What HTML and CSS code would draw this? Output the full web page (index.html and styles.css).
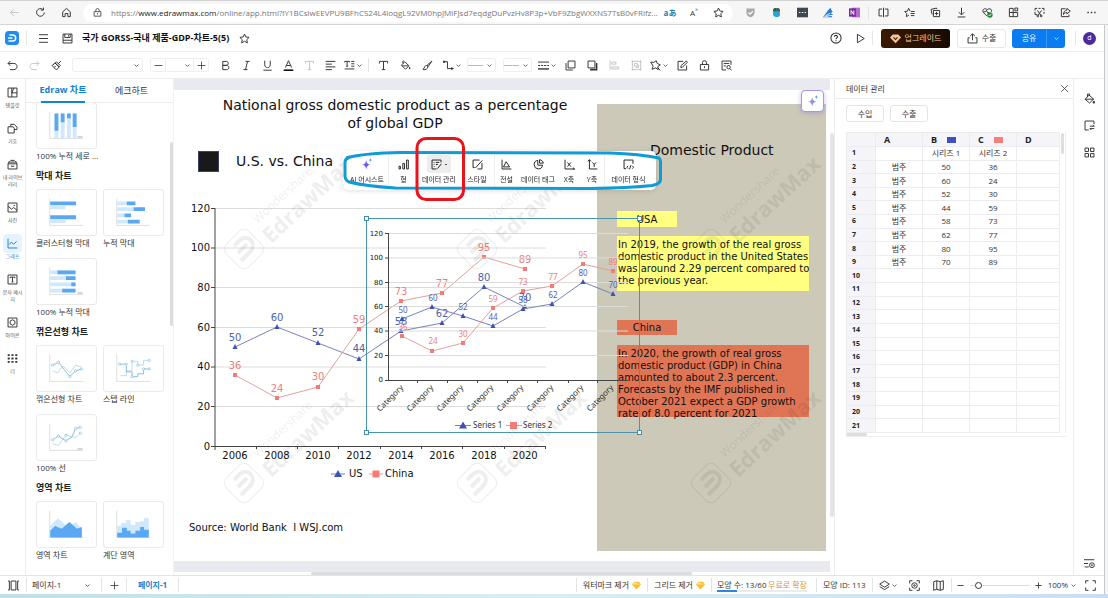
FILE: index.html
```html
<!DOCTYPE html>
<html lang="ko">
<head>
<meta charset="utf-8">
<meta name="viewport" content="width=device-width, initial-scale=1">
<title>EdrawMax</title>
<link rel="stylesheet" href="styles.css">
</head>
<body>
<svg class="defs" aria-hidden="true">
  <symbol id="i-chev" viewBox="0 0 16 16"><path d="M2 5l6 6 6-6"/></symbol>
  <symbol id="i-back" viewBox="0 0 16 16"><path d="M14 8H2M7 3L2 8l5 5"/></symbol>
  <symbol id="i-reload" viewBox="0 0 16 16"><path d="M13.500 8A5.600 5.600 0 1 1 11.500 3.600M8.500 4.500h3.800V.8"/></symbol>
  <symbol id="i-home" viewBox="0 0 16 16"><path d="M2.500 7L8 2l5.500 5v7H10V9.500H6V14H2.500z"/></symbol>
  <symbol id="i-lock" viewBox="0 0 16 16"><path d="M2 6.500h12v8H2zM5 6.500V4a3 3 0 0 1 6 0v2.500M8 9v2.500"/></symbol>
  <symbol id="i-star" viewBox="0 0 16 16"><path d="M8 1.500l2 4.300 4.700.6-3.400 3.300.8 4.700L8 12.100l-4.100 2.300.8-4.700L1.300 6.400 6 5.800z"/></symbol>
  <symbol id="i-shield" viewBox="0 0 16 16"><path d="M2 2h12v6c0 4-3 6-6 7-3-1-6-3-6-7z" fill="#a9a9a9" stroke="none"/><path d="M5 8l2.500 2.500L11.500 6" stroke="#fff" stroke-width="1.600"/></symbol>
  <symbol id="i-mouse" viewBox="0 0 16 16"><path d="M3 4c1-3 9-3 10 0v7c0 5-9 5-10 0z" fill="#2aa3d8" stroke="none"/><path d="M3 4c1-3 4-3 5-2v4H3z" fill="#1b6a3c" stroke="none"/><path d="M8 2c2-1 4 0 5 2v2H8z" fill="#555" stroke="none"/></symbol>
  <symbol id="i-dots-sq" viewBox="0 0 16 16"><path d="M0 1h16v14H0z" fill="#3d4852" stroke="none"/><path d="M3 8h2M7 8h2M11 8h2" stroke="#fff" stroke-width="1.800"/></symbol>
  <symbol id="i-wing" viewBox="0 0 16 16"><path d="M0 15l5-7 2-3 4-4 1 3 2 3-3 2 4 2-4 1 3 3z" fill="#2d7bd0" stroke="none"/><path d="M2 14l8-5M4 14l8-2" stroke="#f6f6f6"/></symbol>
  <symbol id="i-onenote" viewBox="0 0 16 16"><path d="M4 1h12v14H4z" fill="#b36ad0" stroke="none"/><path d="M0 2h10v12H0z" fill="#7a2a9c" stroke="none"/><path d="M3 11V5l4 6V5" stroke="#fff"/></symbol>
  <symbol id="i-split" viewBox="0 0 16 16"><path d="M6 3H1.500v10H6M10 3h4.500v10H10M8 1v14"/></symbol>
  <symbol id="i-fav" viewBox="0 0 16 16"><path d="M9 6L6.800 2 5 6l-4 .5 3 3L3.400 14 7 12M10 6.500h5.500M9.500 9.500h6M10 12.500h5"/></symbol>
  <symbol id="i-collect" viewBox="0 0 16 16"><path d="M5 5h9v9H5zM3 11L1.500 3.500l8-2L10 3M9.500 7v5M7 9.500h5"/></symbol>
  <symbol id="i-down" viewBox="0 0 16 16"><path d="M8 1v10M4 7.500l4 4 4-4M2.500 14.500h11"/></symbol>
  <symbol id="i-heart" viewBox="0 0 16 16"><path d="M7 13L2 8C-.5 4 4 .5 7.500 4 11 .5 15.500 4 13.500 7M2 7h3l1.500-2L8 8h2"/><circle cx="11.500" cy="11.500" r="4" fill="#1d8a34" stroke="none"/><path d="M9.500 11.500l1.500 1.500 2.500-3" stroke="#fff"/></symbol>
  <symbol id="i-ext" viewBox="0 0 16 16"><path d="M2 2h5.500v12H2zM2 8h12v6H7.500M10 1.500h4v4h-4z"/></symbol>
  <symbol id="i-snip" viewBox="0 0 16 16"><path d="M1.500 5V2h3M6.500 2h3M11.500 2h3v3M14.500 7v3M1.500 7v4h3M6 12l5-7M10 12L5 5"/><circle cx="5.500" cy="13" r="1.300"/><circle cx="10.500" cy="13" r="1.300"/></symbol>
  <symbol id="i-share" viewBox="0 0 16 16"><path d="M8 2.500H2V14h11v-3M10 2l5 4-5 4V8c-3 0-4 1-5 3 0-4 2-6 5-6.500z"/></symbol>
  <symbol id="i-more" viewBox="0 0 16 16"><path d="M2 8h2M7 8h2M12 8h2" stroke-width="2"/></symbol>
  <symbol id="i-menu" viewBox="0 0 16 16"><path d="M1.500 2.500h13M1.500 8h13M1.500 13.500h13"/></symbol>
  <symbol id="i-save" viewBox="0 0 16 16"><path d="M1.500 1.500h13v13h-13zM4 1.500v5h8v-5M9.500 3v2M1.500 10.500h13"/></symbol>
  <symbol id="i-help" viewBox="0 0 16 16"><circle cx="8" cy="8" r="6.800"/><path d="M5.800 6.300C6 3.700 10.300 4 10 6.500 9.800 7.800 8 8 8 9.500M8 11v1.200"/></symbol>
  <symbol id="i-play" viewBox="0 0 16 16"><path d="M3.500 1.800L13.500 8l-10 6.200z"/></symbol>
  <symbol id="i-gem" viewBox="0 0 16 16"><path d="M4 2h8l4 4.500L8 15 0 6.500z" stroke="none" fill="currentColor"/><path d="M5.200 6.500L8 9.500l2.800-3" stroke="#3a1a00" stroke-width="1.600"/></symbol>
  <symbol id="i-gold" viewBox="0 0 16 16"><path d="M3.500 1.500h9L16 6l-8 9L0 6z" fill="#f7bd34" stroke="none"/><path d="M3.500 1.500L0 6h16L10 4z" fill="#ffdf7a" stroke="none"/></symbol>
  <symbol id="i-export" viewBox="0 0 16 16"><path d="M8 10.500V1.500M4.500 4.500L8 1.200l3.500 3.300M4 7H1.500v7.500h13V7H12"/></symbol>
  <symbol id="i-undo" viewBox="0 0 16 16"><path d="M5 1.500L1.500 5 5 8.500M1.500 5H10c6 0 6 9 0 9H4.500"/></symbol>
  <symbol id="i-redo" viewBox="0 0 16 16"><path d="M11 1.500L14.500 5 11 8.500M14.500 5H6c-6 0-6 9 0 9h5.500"/></symbol>
  <symbol id="i-brush" viewBox="0 0 16 16"><path d="M14.500 1.500L10.500 5.500M6 4l6 6M8 2.500l5.500 5.500-2 2L6 4.500zM6 4.500L1.500 8 8 14.500 12 10M4.500 11L7 8.500"/></symbol>
  <symbol id="i-bold" viewBox="0 0 16 16"><path d="M4 2h5c4 0 4 5.800 0 5.800H4zM4 7.800h5.500c4.500 0 4.500 6.200 0 6.200H4z"/></symbol>
  <symbol id="i-ital" viewBox="0 0 16 16"><path d="M6.500 2h6M3.500 14h6M9.500 2l-3 12"/></symbol>
  <symbol id="i-under" viewBox="0 0 16 16"><path d="M4 1v6c0 5.500 8 5.500 8 0V1M2 14.800h12"/></symbol>
  <symbol id="i-color" viewBox="0 0 16 16"><path d="M3.500 11L8 1l4.500 10M5 8h6"/><path d="M1 14.800h14" stroke="#000" stroke-width="2.200"/></symbol>
  <symbol id="i-text" viewBox="0 0 16 16"><path d="M2 5V2h12v3M8 2v12M5.500 14h5"/></symbol>
  <symbol id="i-align" viewBox="0 0 16 16"><path d="M1 2h14M1 6h9M1 10h14M1 14h9"/></symbol>
  <symbol id="i-tline" viewBox="0 0 16 16"><path d="M1 3.500V2h7v1.500M4.500 2v7M3 9h3M10.500 2H15M10.500 5.500H15M10.500 9H15M1 13h14"/></symbol>
  <symbol id="i-fill" viewBox="0 0 16 16"><path d="M7 2.500l6 6-5 5-6-6zM3 8.500h9M5 5L3.500 2.500 6 1"/><path d="M14 10.500c2 3-2 3 0 0z" fill="currentColor"/></symbol>
  <symbol id="i-pen" viewBox="0 0 16 16"><path d="M14.500 1.500L7.500 7.500l1.500 2 5.500-8zM7 8c-3-.5-3 3-5.500 6C5 14.500 9 13 8.500 9.500z"/></symbol>
  <symbol id="i-conn" viewBox="0 0 16 16"><path d="M1 2.500h5.500v10H13"/><path d="M0 1h3v3H0zM12 10l4 2.500-4 2.500z" fill="currentColor" stroke="none"/></symbol>
  <symbol id="i-lines" viewBox="0 0 16 16"><path d="M0 3h16"/><path d="M0 8h16" stroke-dasharray="3 1.500"/><path d="M0 13h16" stroke-width="2"/></symbol>
  <symbol id="i-front" viewBox="0 0 16 16"><path d="M4.500 1.500h10v10h-10zM1.500 4.500v10h10"/></symbol>
  <symbol id="i-backw" viewBox="0 0 16 16"><path d="M1.500 1.500h10v10h-10z"/><path d="M14 4.500V14H4.500" stroke-width="2.200"/></symbol>
  <symbol id="i-alignl" viewBox="0 0 16 16"><path d="M1.500 1v14M4 3h6v3H4zM4 10h10v3H4z"/></symbol>
  <symbol id="i-group" viewBox="0 0 16 16"><path d="M2 2h12v12H2zM5 5h4v4H5zM7.500 9.500V11H11V7H9.500"/><path d="M1 2h2M13 2h2M1 14h2M13 14h2" stroke-width="2.500"/></symbol>
  <symbol id="i-fx" viewBox="0 0 16 16"><path d="M1 3l4.500.5L9 1l1.500 4L15 7l-3.500 2.500L12 14 8 11.500l-5 2L4.500 9zM11 11l4 4"/></symbol>
  <symbol id="i-edit" viewBox="0 0 16 16"><path d="M9 2H1.500v12.500H14V8M5.500 11l.5-3 7.500-6.500 1.500 2L8 10.500z"/></symbol>
  <symbol id="i-find" viewBox="0 0 16 16"><path d="M14.500 7V1.500h-13v13h6M4 5h8M4 8.500h3"/><circle cx="11" cy="10.500" r="2.500"/><path d="M13 12.500l2.500 2.500"/></symbol>
  <symbol id="i-tpl" viewBox="0 0 16 16"><path d="M1.500 1.500h13v13h-13zM7 1.500v13M7 8.500h7.500M7 8.500l3-7"/></symbol>
  <symbol id="i-shape" viewBox="0 0 16 16"><path d="M5.500 5V2h5l4 4v3.500h-4M1.500 5.500H9l1.500 2v7h-9z"/></symbol>
  <symbol id="i-lib" viewBox="0 0 16 16"><path d="M1.500 7h13v7.500h-13zM3 4.500h10M5 2h6M1.500 7L3.500 3M14.500 7l-2-4M5.500 10.500h5"/></symbol>
  <symbol id="i-pic" viewBox="0 0 16 16"><path d="M1.500 1.500h13v13h-13zM1.500 6l5 4.500 3-2.500 5 4M9.500 5h2"/></symbol>
  <symbol id="i-graph" viewBox="0 0 16 16"><path d="M1.500 1v13.500H15M3.500 9.500L6 6l3.500 3 4.500-4"/></symbol>
  <symbol id="i-txtbox" viewBox="0 0 16 16"><path d="M1.500 1.500h13v13h-13zM4.500 6V4.500h7V6M8 4.500v7M6.500 11.500h3"/></symbol>
  <symbol id="i-icon" viewBox="0 0 16 16"><path d="M1.500 1.500h13v13h-13z"/><path d="M8 4l3.500 2v4L8 12l-3.500-2V6z"/></symbol>
  <symbol id="i-nine" viewBox="0 0 16 16"><path d="M1 3h3M6.500 3h3M12 3h3M1 8h3M6.500 8h3M12 8h3M1 13h3M6.500 13h3M12 13h3" stroke-width="2.600"/></symbol>
  <symbol id="i-spark" viewBox="0 0 16 16"><path d="M7 3c.8 4 1.500 5 5.500 6-4 1-4.700 2-5.500 6-.8-4-1.500-5-5.500-6 4-1 4.700-2 5.500-6z" fill="url(#sp)" stroke="none"/><path d="M12.500 0c.4 1.800.8 2.200 2.500 2.700-1.700.5-2.100 1-2.500 2.700-.4-1.700-.8-2.200-2.500-2.700 1.700-.5 2.100-.9 2.500-2.700z" fill="#4aa4f0" stroke="none"/></symbol>
  <symbol id="i-spark2" viewBox="0 0 16 16"><path d="M7 3c.8 4 1.500 5 5.500 6-4 1-4.700 2-5.500 6-.8-4-1.500-5-5.500-6 4-1 4.700-2 5.500-6z" fill="url(#sp2)" stroke="none"/><path d="M12.500 0c.4 1.800.8 2.200 2.500 2.700-1.700.5-2.100 1-2.500 2.700-.4-1.700-.8-2.200-2.500-2.700 1.700-.5 2.100-.9 2.500-2.700z" fill="#4aa4f0" stroke="none"/></symbol>
  <symbol id="i-bars" viewBox="0 0 16 16"><path d="M1.500 10.500h2v4h-2zM7 6.500h2.500v8H7zM12.500 1.500H15v13h-2.500z"/></symbol>
  <symbol id="i-data" viewBox="0 0 16 16"><path d="M14.500 5V1.500h-13v13H8M4 5h1M7 5h5M4 8h1M7 8h3M4 11h1M9.500 14l5.500-7"/></symbol>
  <symbol id="i-styl" viewBox="0 0 16 16"><path d="M11 1.500H1.500v11H4M14.500 6v8.500H8M15 2L5 13"/></symbol>
  <symbol id="i-legend" viewBox="0 0 16 16"><path d="M1.500 1v13.500H15M3.500 11.500L7.500 4l5 7.500z"/></symbol>
  <symbol id="i-pie" viewBox="0 0 16 16"><path d="M7 2a6.200 6.200 0 1 0 7 7H7zM9.500 1c3 .3 5 2.200 5.500 5H9.500z"/></symbol>
  <symbol id="i-xax" viewBox="0 0 16 16"><path d="M1.500 1v13.500H15M13 12.500l2.500 2-2.500 2M5 5l5 6M10 5l-5 6"/></symbol>
  <symbol id="i-yax" viewBox="0 0 16 16"><path d="M3.500 14.500V1M1 3.500L3.500 1 6 3.500M3.500 14.500H15M8 5l2.500 3L13 5M10.500 8v3.500"/></symbol>
  <symbol id="i-code" viewBox="0 0 16 16"><path d="M4.500 14H1.500V1.500h13V7M7.500 10L5.500 12l2 2M13.500 10l2 2-2 2M11.500 9l-2 6"/></symbol>
  <symbol id="i-x" viewBox="0 0 16 16"><path d="M2 2l12 12M14 2L2 14"/></symbol>
  <symbol id="i-bucket" viewBox="0 0 16 16"><path d="M7.500 3l6.500 6-6 5.500L1.500 9zM2 9h12M5 6V1.500h3v3"/><circle cx="14.500" cy="13.500" r="1.300" fill="currentColor"/></symbol>
  <symbol id="i-page" viewBox="0 0 16 16"><path d="M14.500 6V1.500h-13v13H7M8.500 9H15M13 7l2 2M15 12.500H8.500l2 2"/></symbol>
  <symbol id="i-four" viewBox="0 0 16 16"><path d="M1.500 1.500h5v5h-5zM9.500 1.500h5v5h-5zM1.500 9.500h5v5h-5zM9.500 9.500h5v5h-5z"/></symbol>
  <symbol id="i-set" viewBox="0 0 16 16"><path d="M0 2.500h15M0 8h6M1 13h6"/><circle cx="11.500" cy="10.500" r="3.500"/><circle cx="11.500" cy="10.500" r=".8"/></symbol>
  <symbol id="i-pages" viewBox="0 0 16 16"><path d="M4.500 1.500h7v13h-7zM0 1.500h2v13H0M16 1.500h-2v13h2"/></symbol>
  <symbol id="i-plus" viewBox="0 0 16 16"><path d="M8 1v14M1 8h14"/></symbol>
  <symbol id="i-minus" viewBox="0 0 16 16"><path d="M1 8h14"/></symbol>
  <symbol id="i-layers" viewBox="0 0 16 16"><path d="M8 1.500l7 4.500-7 4.500L1 6zM1 9.500L8 14l7-4.500"/></symbol>
  <symbol id="i-focus" viewBox="0 0 16 16"><path d="M1 5V1h4M11 1h4v4M15 11v4h-4M5 15H1v-4"/><circle cx="8" cy="8" r="4"/><circle cx="8" cy="8" r="1.200"/></symbol>
  <symbol id="i-map" viewBox="0 0 16 16"><path d="M1 2.500L5.500 1l5 1.500L15 1v12.500L10.500 15l-5-1.500L1 15zM5.500 1v12.500M10.500 2.500V15"/></symbol>
  <symbol id="i-full" viewBox="0 0 16 16"><path d="M1 5V1h4M11 1h4v4M15 11v4h-4M5 15H1v-4"/></symbol>
  <linearGradient id="sp" x1="0" y1="1" x2="1" y2="0"><stop offset="0" stop-color="#8a3cf0"/><stop offset="1" stop-color="#3f7af0"/></linearGradient>
  <linearGradient id="sp2" x1="0" y1="0" x2="1" y2="0"><stop offset="0" stop-color="#d77be8"/><stop offset="1" stop-color="#45a0ee"/></linearGradient>
</svg>

<div class="browser">
  <button class="bi pale" aria-label="뒤로"><svg class="ic"><use href="#i-back"/></svg></button>
  <button class="bi" aria-label="새로 고침"><svg class="ic"><use href="#i-reload"/></svg></button>
  <button class="bi" aria-label="홈"><svg class="ic"><use href="#i-home"/></svg></button>
  <div class="address">
    <svg class="ic sm"><use href="#i-lock"/></svg>
    <span class="url">https://<b>www.edrawmax.com</b>/online/app.html?lY1BCslwEEVPU9BFhCS24L4loqgL92VM0hpJMiFJsd7eqdgDuPvzHv8P3p+VbF9ZbgWXXNS7TsB0vFRifz...</span>
    <button class="bi translate" aria-label="번역">aあ</button>
    <button class="bi" aria-label="소리내어 읽기">A<sup>»</sup></button>
    <button class="bi" aria-label="즐겨찾기 추가"><svg class="ic"><use href="#i-star"/></svg></button>
  </div>
  <div class="ext">
    <button class="bi" aria-label="보호"><svg class="ic"><use href="#i-shield"/></svg></button>
    <button class="bi" aria-label="마우스"><svg class="ic"><use href="#i-mouse"/></svg></button>
    <button class="bi" aria-label="도구"><svg class="ic"><use href="#i-dots-sq"/></svg></button>
    <button class="bi" aria-label="날개"><svg class="ic"><use href="#i-wing"/></svg></button>
    <button class="bi" aria-label="OneNote"><svg class="ic"><use href="#i-onenote"/></svg></button>
    <i class="sep"></i>
    <button class="bi" aria-label="분할"><svg class="ic"><use href="#i-split"/></svg></button>
    <button class="bi" aria-label="즐겨찾기"><svg class="ic"><use href="#i-fav"/></svg></button>
    <button class="bi" aria-label="컬렉션"><svg class="ic"><use href="#i-collect"/></svg></button>
    <button class="bi" aria-label="다운로드"><svg class="ic"><use href="#i-down"/></svg></button>
    <button class="bi" aria-label="성능"><svg class="ic"><use href="#i-heart"/></svg></button>
    <button class="bi" aria-label="확장"><svg class="ic"><use href="#i-ext"/></svg></button>
    <button class="bi" aria-label="캡처"><svg class="ic"><use href="#i-snip"/></svg></button>
    <button class="bi" aria-label="공유"><svg class="ic"><use href="#i-share"/></svg></button>
    <button class="bi" aria-label="더 보기"><svg class="ic"><use href="#i-more"/></svg></button>
  </div>
</div>

<div class="app">
  <header class="head">
    <svg class="logo" viewBox="0 0 16 16"><rect width="16" height="16" rx="4" fill="#1f8bf5"/><path d="M5 4.500h3.500c5 0 5 7 0 7H4M3.500 8h5" fill="none" stroke="#fff" stroke-width="1.700"/></svg>
    <i class="sep"></i>
    <button class="tb w24" aria-label="메뉴"><svg class="ic"><use href="#i-menu"/></svg></button>
    <button class="tb w24" aria-label="저장"><svg class="ic"><use href="#i-save"/></svg></button>
    <h1 class="doc">국가 GORSS-국내 제품-GDP-차트-5(5)</h1>
    <button class="tb w24" aria-label="별표"><svg class="ic"><use href="#i-star"/></svg></button>
    <div class="grow"></div>
    <button class="tb w24" aria-label="도움말"><svg class="ic lg"><use href="#i-help"/></svg></button>
    <button class="tb w24" aria-label="재생"><svg class="ic"><use href="#i-play"/></svg></button>
    <i class="sep"></i>
    <button class="upgrade"><svg class="ic"><use href="#i-gem"/></svg>업그레이드</button>
    <button class="export"><svg class="ic"><use href="#i-export"/></svg>수출</button>
    <div class="share"><button class="share-main">공유</button><button class="share-more" aria-label="공유 옵션"><svg class="ic xs"><use href="#i-chev"/></svg></button></div>
    <i class="sep"></i>
    <button class="avatar">d</button>
  </header>

  <div class="tools">
    <button class="tb" aria-label="실행 취소"><svg class="ic"><use href="#i-undo"/></svg></button>
    <button class="tb pale" aria-label="다시 실행"><svg class="ic"><use href="#i-redo"/></svg></button>
    <button class="tb" aria-label="서식 복사"><svg class="ic"><use href="#i-brush"/></svg></button>
    <button class="box font" aria-label="글꼴"><svg class="ic xs"><use href="#i-chev"/></svg></button>
    <div class="size"><button class="step" aria-label="작게"><svg class="ic sm"><use href="#i-minus"/></svg></button><button class="box mid-box" aria-label="글꼴 크기"><svg class="ic xs"><use href="#i-chev"/></svg></button><button class="step" aria-label="크게"><svg class="ic sm"><use href="#i-plus"/></svg></button></div>
    <button class="tb w21" aria-label="굵게"><svg class="ic"><use href="#i-bold"/></svg></button>
    <button class="tb w21" aria-label="기울임"><svg class="ic"><use href="#i-ital"/></svg></button>
    <button class="tb w21" aria-label="밑줄"><svg class="ic"><use href="#i-under"/></svg></button>
    <button class="tb w21" aria-label="글꼴 색"><svg class="ic"><use href="#i-color"/></svg></button>
    <button class="tb w21 pale" aria-label="텍스트 효과"><svg class="ic"><use href="#i-text"/></svg></button>
    <button class="tb w21" aria-label="정렬"><svg class="ic"><use href="#i-align"/></svg></button>
    <button class="tb w24" aria-label="줄 간격"><svg class="ic"><use href="#i-tline"/></svg><svg class="ic xs"><use href="#i-chev"/></svg></button>
    <i class="sep"></i>
    <button class="tb" aria-label="텍스트"><svg class="ic"><use href="#i-text"/></svg></button>
    <button class="tb" aria-label="채우기"><svg class="ic"><use href="#i-fill"/></svg></button>
    <button class="tb" aria-label="선 색"><svg class="ic"><use href="#i-pen"/></svg></button>
    <button class="tb w28" aria-label="연결선"><svg class="ic"><use href="#i-conn"/></svg><svg class="ic xs"><use href="#i-chev"/></svg></button>
    <button class="box line" aria-label="선 스타일"><i></i><svg class="ic xs"><use href="#i-chev"/></svg></button>
    <button class="box line" aria-label="화살표 스타일"><i></i><svg class="ic xs"><use href="#i-chev"/></svg></button>
    <button class="tb w24" aria-label="선 굵기"><svg class="ic"><use href="#i-lines"/></svg><svg class="ic xs"><use href="#i-chev"/></svg></button>
    <button class="tb" aria-label="앞으로"><svg class="ic"><use href="#i-front"/></svg></button>
    <button class="tb" aria-label="뒤로 보내기"><svg class="ic"><use href="#i-backw"/></svg></button>
    <button class="tb pale" aria-label="맞춤"><svg class="ic"><use href="#i-alignl"/></svg></button>
    <button class="tb pale" aria-label="그룹"><svg class="ic"><use href="#i-group"/></svg></button>
    <button class="tb w24" aria-label="효과"><svg class="ic"><use href="#i-fx"/></svg><svg class="ic xs"><use href="#i-chev"/></svg></button>
    <button class="tb" aria-label="편집"><svg class="ic"><use href="#i-edit"/></svg></button>
    <button class="tb" aria-label="잠금"><svg class="ic"><use href="#i-lock"/></svg></button>
    <button class="tb" aria-label="찾기"><svg class="ic"><use href="#i-find"/></svg></button>
  </div>

  <div class="main">
    <nav class="rail">
      <button class="ri"><span><svg class="ic"><use href="#i-tpl"/></svg></span>템플릿</button>
      <button class="ri"><span><svg class="ic"><use href="#i-shape"/></svg></span>기호</button>
      <button class="ri"><span><svg class="ic"><use href="#i-lib"/></svg></span>내 라이브<br>러리</button>
      <button class="ri"><span><svg class="ic"><use href="#i-pic"/></svg></span>사진</button>
      <button class="ri on"><span><svg class="ic"><use href="#i-graph"/></svg></span>그래프</button>
      <button class="ri"><span><svg class="ic"><use href="#i-txtbox"/></svg></span>문자 메시<br>지</button>
      <button class="ri"><span><svg class="ic"><use href="#i-icon"/></svg></span>아이콘</button>
      <button class="ri"><span><svg class="ic"><use href="#i-nine"/></svg></span>더</button>
    </nav>

    <aside class="panel">
      <div class="tabs"><button class="tab on">Edraw 차트</button><button class="tab">에크하트</button></div>
      <div class="list">
        <div class="cards">
          <button class="card"><svg viewBox="0 0 61 47"><path class="ax" d="M13 9v28h35"/><path class="l" d="M18 11h4v26h-4zM24.500 11h4v26h-4zM31 11h4v26h-4zM37 11h4v26h-4z"/><path class="d" d="M18 11h4v18h-4zM24.500 11h4v9h-4zM31 11h4v5h-4zM37 11h4v14h-4z"/><path class="pc" d="M42 35.500h5"/></svg><span>100% 누적 세로 ...</span></button>
        </div>
        <h2>막대 차트</h2>
        <div class="cards">
          <button class="card"><svg viewBox="0 0 61 47"><path class="ax" d="M13 9v28h35"/><path class="d" d="M13.500 12h27v4h-27zM13.500 26.500h27v4h-27z"/><path class="l" d="M13.500 16h16v4h-16zM13.500 30.500h16v4h-16z"/></svg><span>클러스터형 막대</span></button>
          <button class="card"><svg viewBox="0 0 61 47"><path class="ax" d="M13 9v28h35"/><path class="l" d="M13.500 12h10v4h-10zM13.500 18h17v4h-17zM13.500 24.500h7v4h-7zM13.500 31h11v4h-11z"/><path class="d" d="M23.500 12h9v4h-9zM30.500 18h12v4h-12zM21 24.500h7v4h-7zM24.500 31H37v4H24.500z"/></svg><span>누적 막대</span></button>
          <button class="card"><svg viewBox="0 0 61 47"><path class="ax" d="M13 9v28h35"/><path class="l" d="M13.500 12h26v4h-26zM13.500 18h26v4h-26zM13.500 24.500h26v4h-26zM13.500 31h26v4h-26z"/><path class="d" d="M21 12h19v4H21zM30 18h10v4H30zM35.500 24.500H40v4h-4.500zM26 31h14v4H26z"/><path class="pc" d="M42 35.500h5"/></svg><span>100% 누적 막대</span></button>
        </div>
        <h2>꺾은선형 차트</h2>
        <div class="cards">
          <button class="card"><svg viewBox="0 0 61 47"><path class="ax" d="M13 9v28h35"/><path class="ln" d="M16 26l5 2 6-7 7 7 6-8 6 2"/><path class="dn" d="M16 20l6-3 12 15 6-6 6-2"/><g class="pt"><circle cx="16" cy="20" r="1.200"/><circle cx="22" cy="17" r="1.200"/><circle cx="34" cy="32" r="1.200"/><circle cx="40" cy="26" r="1.200"/><circle cx="46" cy="24" r="1.200"/></g></svg><span>꺾은선형 차트</span></button>
          <button class="card"><svg viewBox="0 0 61 47"><path class="ax" d="M13 9v28h35"/><path class="ln" d="M17 31h6v-5h6V16h6v4h6v-5h6"/><path class="dn" d="M16 19h7v8h6v5h6v-3h6v-5h6"/><g class="pt"><circle cx="16" cy="19" r="1.200"/><circle cx="23" cy="19" r="1.200"/><circle cx="29" cy="32" r="1.200"/><circle cx="29" cy="16" r="1.200"/><circle cx="35" cy="20" r="1.200"/><circle cx="41" cy="24" r="1.200"/><circle cx="47" cy="15" r="1.200"/><circle cx="47" cy="24" r="1.200"/></g></svg><span>스텝 라인</span></button>
          <button class="card"><svg viewBox="0 0 61 47"><path class="ax" d="M13 9v28h35"/><path class="ln" d="M16 30l6 2 8-11 6 2 5 0 4-4"/><path class="dn" d="M16 26l6-4 8 5 6-4 4-9 5-1"/><g class="pt"><circle cx="16" cy="26" r="1.200"/><circle cx="22" cy="22" r="1.200"/><circle cx="30" cy="27" r="1.200"/><circle cx="30" cy="21" r="1.200"/><circle cx="40" cy="14" r="1.200"/><circle cx="45" cy="13" r="1.200"/><circle cx="45" cy="19" r="1.200"/></g><path class="pc" d="M42 35.500h5"/></svg><span>100% 선</span></button>
        </div>
        <h2>영역 차트</h2>
        <div class="cards">
          <button class="card"><svg viewBox="0 0 61 47"><path class="ax" d="M13 9v28h35"/><path class="l" d="M13.500 25l8-8 9 8 5-1 5-3 6 7v9h-33z"/><path class="d" d="M13.500 30l5-5 7 3 8-7 8 7 5-2v11h-33z"/></svg><span>영역 차트</span></button>
          <button class="card"><svg viewBox="0 0 61 47"><path class="ax" d="M13 9v28h35"/><path class="l" d="M13.500 25h4v-3h5v-3h5v5h5v-3h5v-1h4v-3h5v20h-33z"/><path class="d" d="M13.500 32h5v-5h5v3h4v3h5v-3h5v-4h4v3h5v8h-33z"/></svg><span>계단 영역</span></button>
          <button class="card" aria-label="누적 영역"><svg viewBox="0 0 61 47"><path class="ax" d="M13 9v28h35"/></svg></button>
        </div>
      </div>
      <i class="thumb-side"></i>
    </aside>

    <section class="canvas">
      <div class="strip top"></div>
      <div class="page">
        <svg class="drawing" width="656" height="471" viewBox="174 90 656 471">
          <defs>
            <g id="wm">
              <rect x="-16" y="-16" width="32" height="32" rx="7" transform="rotate(45)" fill="none" stroke="#000" stroke-width="1"/>
              <path d="M-10 -3L-4 -9C4 -16 14 -5 6 3L-3 12M-6 4L3 -5" fill="none" stroke="#000" stroke-width="4"/>
              <g transform="rotate(-43)"><text class="wm1" x="27" y="-9">Wondershare</text><text class="wm2" x="23" y="15">EdrawMax</text></g>
            </g>
            <path id="tri" d="M0 -3L2.500 2H-2.500z" fill="#3f51b5"/>
            <rect id="sq" x="-2" y="-2" width="4" height="4" fill="#f47c76"/>
          </defs>
          <rect x="597" y="104" width="229" height="447" fill="#cdc9b8"/>
          <text class="t14 mid" x="395" y="110">National gross domestic product as a percentage</text>
          <text class="t14 mid" x="395" y="128">of global GDP</text>
          <rect x="198.500" y="151.500" width="20" height="20" fill="#191919" stroke="#3a4266"/>
          <text class="t14" x="236" y="166">U.S. vs. China</text>
          <text class="t14" x="650" y="155">Domestic Product</text>
          <text class="t10" x="189" y="531" xml:space="preserve">Source: World Bank  I WSJ.com</text>

          <rect x="617" y="211" width="60" height="16" fill="#ffff80"/>
          <text class="t10 mid" x="647" y="223">USA</text>
          <rect x="617" y="236" width="192" height="55" fill="#ffff80"/>
          <text class="t10"><tspan x="618" y="248">In 2019, the growth of the real gross</tspan><tspan x="618" y="260">domestic product in the United States</tspan><tspan x="618" y="272">was around 2.29 percent compared to</tspan><tspan x="618" y="284">the previous year.</tspan></text>
          <rect x="617" y="320" width="60" height="15" fill="#e07555"/>
          <text class="t10 mid" x="647" y="331">China</text>
          <rect x="617" y="345" width="192" height="72" fill="#e07555"/>
          <text class="t10"><tspan x="618" y="357">In 2020, the growth of real gross</tspan><tspan x="618" y="369">domestic product (GDP) in China</tspan><tspan x="618" y="381">amounted to about 2.3 percent.</tspan><tspan x="618" y="393">Forecasts by the IMF published in</tspan><tspan x="618" y="405">October 2021 expect a GDP growth</tspan><tspan x="618" y="417">rate of 8.0 percent for 2021</tspan></text>

          <path class="grid" d="M215 208.500h331M215 248h331M215 287.500h331M215 327.500h331M215 367h331M215 406.500h331"/>
          <path class="axis" d="M215 208v242M211 446.500H546M211 208.500h4M211 248h4M211 287.500h4M211 327.500h4M211 367h4M211 406.500h4M256.500 446v3M297.500 446v3M338.500 446v3M380.500 446v3M421.500 446v3M462.500 446v3M504.500 446v3M545.500 446v3"/>
          <g class="t10 end"><text x="210" y="212">120</text><text x="210" y="251">100</text><text x="210" y="291">80</text><text x="210" y="331">60</text><text x="210" y="370">40</text><text x="210" y="410">20</text><text x="210" y="450">0</text></g>
          <g class="t10 mid"><text x="235" y="459">2006</text><text x="277" y="459">2008</text><text x="318" y="459">2010</text><text x="359" y="459">2012</text><text x="401" y="459">2014</text><text x="442" y="459">2016</text><text x="484" y="459">2018</text><text x="525" y="459">2020</text></g>
          <polyline class="us" points="235,347 277,327 318,343 359,359 401,331 442,323 484,287 525,307"/>
          <polyline class="cn" points="235,375 277,398 318,387 359,329 401,301 442,293 484,257 525,269"/>
          <g><use href="#tri" x="235" y="347"/><use href="#tri" x="277" y="327"/><use href="#tri" x="318" y="343"/><use href="#tri" x="359" y="359"/><use href="#tri" x="401" y="331"/><use href="#tri" x="442" y="323"/><use href="#tri" x="484" y="287"/><use href="#tri" x="525" y="307"/></g>
          <g><use href="#sq" x="235" y="375"/><use href="#sq" x="277" y="398"/><use href="#sq" x="318" y="387"/><use href="#sq" x="359" y="329"/><use href="#sq" x="401" y="301"/><use href="#sq" x="442" y="293"/><use href="#sq" x="484" y="257"/><use href="#sq" x="525" y="269"/></g>
          <g class="t10 mid ust"><text x="235" y="341">50</text><text x="277" y="321">60</text><text x="318" y="336">52</text><text x="359" y="352">44</text><text x="401" y="325">58</text><text x="442" y="317">62</text><text x="484" y="281">80</text><text x="525" y="301">70</text></g>
          <g class="t10 mid cnt"><text x="235" y="369">36</text><text x="277" y="392">24</text><text x="318" y="380">30</text><text x="359" y="323">59</text><text x="401" y="295">73</text><text x="442" y="287">77</text><text x="484" y="251">95</text><text x="525" y="263">89</text></g>
          <path class="us" d="M331 474h14"/><path d="M338 470l4 7h-8z" fill="#3f51b5"/><text class="t10" x="349" y="477">US</text>
          <path class="cn" d="M369 474h14"/><rect x="372.500" y="470.500" width="7" height="7" fill="#f47c76"/><text class="t10" x="385" y="477">China</text>

          <path class="grid" d="M388 233.500h240M388 258h240M388 282.500h240M388 306.500h240M388 331h240M388 355.500h240"/>
          <path class="axis" d="M388.500 233v147M385 380.500h243M385 233.500h3M385 258h3M385 282.500h3M385 306.500h3M385 331h3M385 355.500h3M417.500 380v3M447.500 380v3M477.500 380v3M507.500 380v3M537.500 380v3M568.500 380v3M597.500 380v3"/>
          <g class="t7 end"><text x="383" y="236">120</text><text x="383" y="260">100</text><text x="383" y="285">80</text><text x="383" y="309">60</text><text x="383" y="333">40</text><text x="383" y="358">20</text><text x="383" y="382">0</text></g>
          <polyline class="us" points="402,319 432,307 463,316 493,326 523,309 552,304 583,282 613,294"/>
          <polyline class="cn" points="402,336 432,351 463,343 493,308 523,291 552,286 583,264 613,271"/>
          <g><use href="#tri" x="402" y="319"/><use href="#tri" x="432" y="307"/><use href="#tri" x="463" y="316"/><use href="#tri" x="493" y="326"/><use href="#tri" x="523" y="309"/><use href="#tri" x="552" y="304"/><use href="#tri" x="583" y="282"/><use href="#tri" x="613" y="294"/></g>
          <g><use href="#sq" x="402" y="336"/><use href="#sq" x="432" y="351"/><use href="#sq" x="463" y="343"/><use href="#sq" x="493" y="308"/><use href="#sq" x="523" y="291"/><use href="#sq" x="552" y="286"/><use href="#sq" x="583" y="264"/><use href="#sq" x="613" y="271"/></g>
          <g class="n8 mid ust"><text x="403" y="313">50</text><text x="433" y="301">60</text><text x="463" y="310">52</text><text x="493" y="320">44</text><text x="523" y="303">58</text><text x="553" y="298">62</text><text x="583" y="276">80</text><text x="613" y="288">70</text></g>
          <g class="n8 mid cnt"><text x="403" y="330">36</text><text x="433" y="344">24</text><text x="463" y="337">30</text><text x="493" y="302">59</text><text x="523" y="285">73</text><text x="553" y="280">77</text><text x="583" y="258">95</text><text x="613" y="265">89</text></g>
          <g class="n8 end"><text transform="translate(404 388) rotate(-45)">Category</text><text transform="translate(434 388) rotate(-45)">Category</text><text transform="translate(464 388) rotate(-45)">Category</text><text transform="translate(494 388) rotate(-45)">Category</text><text transform="translate(524 388) rotate(-45)">Category</text><text transform="translate(554 388) rotate(-45)">Category</text><text transform="translate(584 388) rotate(-45)">Category</text><text transform="translate(614 388) rotate(-45)">Category</text></g>
          <path class="us" d="M455 425.500h16"/><path d="M463 421.500l4 7h-8z" fill="#3f51b5"/><g class="n8"><text x="473" y="428">Series 1</text></g>
          <path class="cn" d="M506 425.500h16"/><rect x="510" y="422" width="7" height="7" fill="#f47c76"/><g class="n8"><text x="523" y="428">Series 2</text></g>

          <g class="wm"><use href="#wm" x="244" y="249"/><use href="#wm" x="477" y="249"/><use href="#wm" x="711" y="249"/><use href="#wm" x="244" y="483"/><use href="#wm" x="477" y="483"/><use href="#wm" x="711" y="483"/></g>
          <g fill="none" stroke="#4a93ad"><rect x="366.500" y="218.500" width="273" height="214"/><path d="M639.500 219v213" stroke="#4b8fd0"/></g>
          <g fill="#fff" stroke="#3f8fb0"><rect x="364.500" y="216.500" width="4" height="4"/><rect x="637.500" y="216.500" width="4" height="4"/><rect x="364.500" y="430.500" width="4" height="4"/><rect x="637.500" y="430.500" width="4" height="4"/></g>
        </svg>

        <div class="float">
          <button class="fb w42"><span><svg class="ic lg"><use href="#i-spark"/></svg></span>AI 어시스트</button>
          <button class="fb w30 ls"><span><svg class="ic"><use href="#i-bars"/></svg></span>형</button>
          <button class="fb w42 sel"><span><svg class="ic"><use href="#i-data"/></svg><b></b></span>데이터 관리</button>
          <button class="fb w34"><span><svg class="ic"><use href="#i-styl"/></svg></span>스타일</button>
          <button class="fb w24 ls"><span><svg class="ic"><use href="#i-legend"/></svg></span>전설</button>
          <button class="fb w40"><span><svg class="ic"><use href="#i-pie"/></svg></span>데이터 태그</button>
          <button class="fb w22"><span><svg class="ic"><use href="#i-xax"/></svg></span>X축</button>
          <button class="fb w24"><span><svg class="ic"><use href="#i-yax"/></svg></span>Y축</button>
          <button class="fb w48 ls"><span><svg class="ic"><use href="#i-code"/></svg></span>데이터 형식</button>
        </div>
        <svg class="marks" width="330" height="70" viewBox="340 135 330 70" fill="none" stroke-width="3">
          <path d="M346 158Q365 153 401 152.500L610 153Q640 154 659 158Q661 160 660.500 165V180Q660 184 652 185.500Q630 188 590 188.500L395 188Q365 186 349 182Q345 180 345 176V162Q345 159 350 157" stroke="#0f9bd8"/>
          <rect x="417" y="138.500" width="46.500" height="61" rx="9" stroke="#e8141c"/>
        </svg>
        <button class="ai" aria-label="AI"><svg class="ic lg"><use href="#i-spark2"/></svg></button>
        <i class="thumb-v"></i>
      </div>
      <div class="strip bottom"></div>
      <i class="thumb-h"></i>
    </section>

    <aside class="data">
      <div class="data-head"><span>데이터 관리</span><button class="close" aria-label="닫기"><svg class="ic sm"><use href="#i-x"/></svg></button></div>
      <div class="data-btns"><button>수입</button><button>수출</button></div>
      <div class="sheet">
        <table>
          <colgroup><col class="c0"><col class="c1"><col class="c1"><col class="c1"><col></colgroup>
          <thead><tr><th></th><th>A</th><th>B<i class="sw blue"></i></th><th>C<i class="sw red"></i></th><th>D</th></tr></thead>
          <tbody>
            <tr><th>1</th><td></td><td>시리즈 1</td><td>시리즈 2</td><td></td></tr>
            <tr><th>2</th><td>범주</td><td>50</td><td>36</td><td></td></tr>
            <tr><th>3</th><td>범주</td><td>60</td><td>24</td><td></td></tr>
            <tr><th>4</th><td>범주</td><td>52</td><td>30</td><td></td></tr>
            <tr><th>5</th><td>범주</td><td>44</td><td>59</td><td></td></tr>
            <tr><th>6</th><td>범주</td><td>58</td><td>73</td><td></td></tr>
            <tr><th>7</th><td>범주</td><td>62</td><td>77</td><td></td></tr>
            <tr><th>8</th><td>범주</td><td>80</td><td>95</td><td></td></tr>
            <tr><th>9</th><td>범주</td><td>70</td><td>89</td><td></td></tr>
            <tr><th>10</th><td></td><td></td><td></td><td></td></tr>
            <tr><th>11</th><td></td><td></td><td></td><td></td></tr>
            <tr><th>12</th><td></td><td></td><td></td><td></td></tr>
            <tr><th>13</th><td></td><td></td><td></td><td></td></tr>
            <tr><th>14</th><td></td><td></td><td></td><td></td></tr>
            <tr><th>15</th><td></td><td></td><td></td><td></td></tr>
            <tr><th>16</th><td></td><td></td><td></td><td></td></tr>
            <tr><th>17</th><td></td><td></td><td></td><td></td></tr>
            <tr><th>18</th><td></td><td></td><td></td><td></td></tr>
            <tr><th>19</th><td></td><td></td><td></td><td></td></tr>
            <tr><th>20</th><td></td><td></td><td></td><td></td></tr>
            <tr><th>21</th><td></td><td></td><td></td><td></td></tr>
          </tbody>
        </table>
        <div class="vbar"><i></i></div>
      </div>
      <div class="hbar"><i></i></div>
    </aside>

    <nav class="rail-right">
      <button class="tb" aria-label="스타일"><svg class="ic"><use href="#i-bucket"/></svg></button>
      <button class="tb" aria-label="페이지"><svg class="ic"><use href="#i-page"/></svg></button>
      <button class="tb" aria-label="앱"><svg class="ic"><use href="#i-four"/></svg></button>
      <div class="grow"></div>
      <button class="tb" aria-label="설정"><svg class="ic"><use href="#i-set"/></svg></button>
    </nav>
  </div>

  <footer class="status">
    <button class="tb pgs" aria-label="페이지 목록"><svg class="ic"><use href="#i-pages"/></svg></button>
    <i class="sep"></i>
    <button class="pgsel">페이지-1<svg class="ic xs"><use href="#i-chev"/></svg></button>
    <i class="sep"></i>
    <button class="tb w24" aria-label="페이지 추가"><svg class="ic sm"><use href="#i-plus"/></svg></button>
    <i class="sep"></i>
    <button class="pgtab">페이지-1</button>
    <i class="sep"></i>
    <div class="grow"></div>
    <i class="sep"></i>
    <button class="st">워터마크 제거<svg class="ic sm"><use href="#i-gold"/></svg></button>
    <i class="sep"></i>
    <button class="st">그리드 제거<svg class="ic sm"><use href="#i-gold"/></svg></button>
    <i class="sep"></i>
    <div class="count"><div><span>모양 수: 13/60</span><a href="#">무료로 확장</a></div><div class="meter"><i style="width:22%"></i></div></div>
    <i class="sep"></i>
    <span class="st">모양 ID: 113</span>
    <i class="sep"></i>
    <button class="tb w30" aria-label="레이어"><svg class="ic"><use href="#i-layers"/></svg><svg class="ic xs"><use href="#i-chev"/></svg></button>
    <button class="tb w24" aria-label="초점"><svg class="ic"><use href="#i-focus"/></svg></button>
    <button class="tb w24" aria-label="지도"><svg class="ic"><use href="#i-map"/></svg></button>
    <i class="sep"></i>
    <button class="zb" aria-label="축소"><svg class="ic xm"><use href="#i-minus"/></svg></button>
    <input class="zoom" type="range" min="0" max="100" value="10" aria-label="확대/축소">
    <button class="zb" aria-label="확대"><svg class="ic xm"><use href="#i-plus"/></svg></button>
    <button class="pct">100%<svg class="ic xs"><use href="#i-chev"/></svg></button>
    <button class="tb full" aria-label="전체 화면"><svg class="ic"><use href="#i-full"/></svg></button>
  </footer>
</div>
<div class="desk"></div>
</body>
</html>
```
FILE: styles.css
```css
* { box-sizing: border-box; }
body {
  margin: 0; height: 100vh; display: flex; flex-direction: column; overflow: hidden;
  background: #f4f5f7; color: #333;
  font: 8px/1.2 "Open Sans", "Noto Sans CJK KR", sans-serif;
}
button { margin: 0; padding: 0; border: 0; background: none; color: inherit; font: inherit; display: flex; align-items: center; justify-content: center; }
i { font-style: normal; }
.defs { position: absolute; width: 0; height: 0; }
.ic { width: 11px; height: 11px; flex: none; fill: none; stroke: currentColor; stroke-width: 1.4; }
.ic.sm { width: 9px; height: 9px; }
.ic.lg { width: 12px; height: 12px; }
.ic.xm { width: 7px; height: 7px; stroke-width: 2; }
.ic.xs { width: 5px; height: 5px; stroke-width: 2.4; }
.sep { width: 1px; height: 14px; background: #e4e4e4; flex: none; }
.grow { flex: 1; }
.pale { color: #c4c4c4; }

.browser { flex: none; display: flex; align-items: center; height: 25px; background: #f6f6f6; border-top: 1px solid #d2d2d2; border-bottom: 1px solid #d4d4d4; padding: 0 4px 0 1px; }
.bi { width: 26px; height: 20px; flex: none; }
.address { flex: 1; min-width: 0; display: flex; align-items: center; height: 18px; margin: 0 4px; padding: 0 3px 0 10px; background: #fff; border-radius: 9px; }
.address .bi { width: 24px; }
.url { flex: 1; min-width: 0; margin-left: 9px; white-space: nowrap; overflow: hidden; color: #777; font-size: 8px; line-height: 14px; }
.url b { color: #222; font-weight: 400; }
.translate { color: #1c7fb0; font-weight: 700; }
.bi sup { font-size: 6px; line-height: 6px; align-self: flex-start; margin-top: 3px; }
.ext { display: flex; align-items: center; }
.ext .sep { margin: 0 1px; }

.app { flex: 1; min-height: 0; display: flex; flex-direction: column; margin-right: 3px; border-right: 1px solid #c8c8c8; background: #fff; }
.head { flex: none; display: flex; align-items: center; height: 27px; padding: 0 8px 0 5px; border-bottom: 1px solid #ededed; }
.logo { width: 14px; height: 14px; margin-right: 7px; }
.head > .sep { margin-right: 4px; }
.tb { width: 22px; height: 18px; flex: none; gap: 2px; }
.w21 { width: 21px; }
.w22 { width: 22px; }
.w24 { width: 24px; }
.w28 { width: 28px; }
.w30 { width: 30px; }
.w34 { width: 34px; }
.w40 { width: 40px; }
.w42 { width: 42px; }
.w48 { width: 48px; }
.doc { margin: 0 3px; font-size: 9px; font-weight: 700; color: #111; white-space: nowrap; }
.upgrade { width: 69px; height: 19px; gap: 4px; border-radius: 3px; background: linear-gradient(90deg, #3a1a00, #180a00); color: #f6c49a; margin: 0 7px 0 4px; }
.export { width: 49px; height: 19px; gap: 4px; border: 1px solid #e6e6e6; border-radius: 3px; margin-right: 6px; }
.share { display: flex; width: 53px; height: 19px; border-radius: 3px; background: #0a7cf2; color: #fff; margin-right: 10px; overflow: hidden; }
.share-main { flex: 1; }
.share-more { width: 19px; border-left: 1px solid #3c98f6; }
.avatar { width: 13px; height: 13px; border-radius: 50%; background: #4b2a9e; color: #fff; font-size: 7px; margin-left: 3px; }

.tools { flex: none; display: flex; align-items: center; height: 27px; padding-left: 1px; border-bottom: 1px solid #ededed; }
.box { height: 14px; border: 1px solid #efefef; border-radius: 2px; justify-content: flex-end; padding-right: 3px; }
.font { width: 71px; margin: 0 7px 0 5px; }
.size { display: flex; width: 59px; margin-right: 6px; border: 1px solid #efefef; border-radius: 2px; }
.size .step { width: 14px; height: 12px; }
.size .mid-box { flex: 1; height: 12px; border-width: 0 1px; border-radius: 0; }
.tools > .sep { margin: 0 3px; }
.line { width: 29px; margin: 0 7px 0 1px; gap: 4px; }
.line + .line { margin: 0 3px 0 0; }
.line i { width: 15px; height: 1px; background: #bbb; }

.main { flex: 1; display: flex; min-height: 0; }
.rail { width: 26px; flex: none; display: flex; flex-direction: column; gap: 10px; padding-top: 4px; border-right: 1px solid #ececec; }
.ri { flex-direction: column; font-size: 5px; line-height: 7px; color: #555; white-space: nowrap; }
.ri span { width: 19px; height: 19px; display: grid; place-items: center; border-radius: 4px; color: #333; }
.ri.on, .ri.on span { color: #1484cf; }
.ri.on span { background: #e6f3fc; }

.panel { position: relative; width: 148px; flex: none; display: flex; flex-direction: column; border-right: 1px solid #f2f2f2; overflow: hidden; }
.tabs { display: flex; height: 24px; flex: none; border-bottom: 1px solid #ececec; padding: 0 0 0 15px; font-size: 9px; }
.tab { height: 24px; width: 44px; white-space: nowrap; margin-right: 30px; }
.tab.on { color: #1482cf; font-weight: 700; border-bottom: 2px solid #1482cf; }
.list { flex: 1; min-height: 0; overflow: hidden; padding: 0 10px; }
.cards { display: grid; grid-template-columns: 61px 61px; gap: 8px 6px; }
.card { display: block; text-align: left; height: 61px; line-height: 14px; white-space: nowrap; }
.card svg { display: block; width: 61px; height: 47px; border: 1px solid #eaeaea; border-radius: 3px; fill: none; }
.list > .cards:first-child { margin-top: -1px; }
.list h2 { margin: 0; font-size: 9px; line-height: 26px; font-weight: 700; color: #222; }
.ax { stroke: #dedede; }
.l { fill: #cfe8fb; }
.d { fill: #5aa8f4; }
.pc { stroke: #aaa; }
.ln { stroke: #b5dcef; }
.dn { stroke: #86bbdc; }
.pt { stroke: #86bbdc; stroke-width: .7; fill: #fff; }
.thumb-side { position: absolute; right: 0; top: 63px; width: 3px; height: 184px; border-radius: 2px; background: #dcdce0; }

.canvas { flex: 1; min-width: 0; display: flex; flex-direction: column; overflow: hidden; }
.strip { flex: none; background: #e9e9f0; margin-right: 4px; }
.top { height: 11px; }
.bottom { height: 11px; }
.page { position: relative; flex: 1; min-height: 0; overflow: hidden; }
.drawing { display: block; }
.thumb-h { flex: none; height: 3px; width: 381px; margin-left: 137px; background: #dcdce2; border-radius: 2px; }
.thumb-v { position: absolute; right: 0; top: 43px; width: 4px; height: 384px; background: #e4e4e8; border-radius: 2px; }
.drawing text { fill: #111; font-family: "DejaVu Sans", sans-serif; }
.t14 { font-size: 14px; }
.t10 { font-size: 10px; }
.t7 { font-size: 7px; }
.n8 { font-size: 8px; }
.drawing .n8 text { font-family: "Noto Sans", sans-serif; fill: #333; }
.mid { text-anchor: middle; }
.end { text-anchor: end; }
.grid { stroke: #dcdcdc; }
.axis { stroke: #444; }
.us, .cn { fill: none; stroke: #7682bf; stroke-width: 1; }
.cn { stroke: #e2a19c; }
.drawing .ust text { fill: #4f5fae; }
.drawing .cnt text { fill: #e9837d; }
.wm { opacity: .07; }
.drawing .wm1 { font: 12px "Open Sans", sans-serif; fill: #000; }
.drawing .wm2 { font: 700 22px "Open Sans", sans-serif; fill: #000; }
.float { position: absolute; left: 169px; top: 61px; display: flex; padding: 4px 4px 3px 3px; height: 39px; background: #fff; border-radius: 5px; box-shadow: 0 1px 5px rgba(0,0,0,.12); }
.fb { flex-direction: column; justify-content: flex-start; font-size: 7px; line-height: 14px; white-space: nowrap; color: #222; }
.fb span { display: flex; align-items: center; justify-content: center; height: 18px; min-width: 22px; gap: 3px; border-radius: 3px; }
.fb b { width: 2px; height: 1px; background: #555; }
.fb.sel span { background: #ededed; width: 24px; }
.ls { border-left: 1px solid #eee; }
.marks { position: absolute; left: 166px; top: 45px; pointer-events: none; }
.ai { position: absolute; right: 10px; top: 0; width: 23px; height: 22px; border: 1px solid #a795ee; border-radius: 4px; background: #fff; box-shadow: 0 1px 5px rgba(120,90,220,.4); }

.data { width: 240px; flex: none; border-left: 1px solid #ececec; border-right: 1px solid #ececec; }
.data-head { display: flex; align-items: center; justify-content: space-between; height: 20px; padding: 0 4px 0 11px; border-bottom: 1px solid #ececec; }
.close { width: 9px; height: 16px; }
.data-btns { display: flex; gap: 6px; padding: 6px 12px 10px 11px; }
.data-btns button { width: 38px; height: 17px; border: 1px solid #e4e4e4; border-radius: 3px; }
.sheet { display: flex; margin: 0 7px 0 11px; border-right: 1px solid #eee; }
table { flex: 1; height: 301px; border-collapse: collapse; table-layout: fixed; border-top: 1px solid #eee; }
.c0 { width: 29px; }
.c1 { width: 47px; }
thead tr { height: 14px; }
tbody tr { height: 13px; }
th, td { padding: 0; border: 1px solid #ebebf0; line-height: 8px; text-align: center; font-size: 8px; white-space: nowrap; }
tbody th { background: #f4f4f9; text-align: left; padding-left: 5px; font-size: 7px; color: #222; }
thead th { background: #f4f4f9; text-align: left; padding-left: 8px; font-size: 9px; color: #222; }
.sw { display: inline-block; width: 9px; height: 6px; margin-left: 10px; }
.blue { background: #3f51bf; }
.red { background: #f77f7a; }
.vbar { width: 5px; padding: 1px 1px; }
.vbar i { display: block; height: 21px; border-radius: 2px; background: #dedede; }
.hbar { margin: 0 7px 0 11px; height: 4px; border-bottom: 1px solid #eee; }
.hbar i { display: block; width: 21px; height: 3px; border-radius: 2px; background: #dedede; }

.rail-right { width: 30px; flex: none; display: flex; flex-direction: column; align-items: center; gap: 9px; padding: 10px 0 3px; }

.status { flex: none; display: flex; align-items: center; height: 19px; border-top: 1px solid #e4e4e4; white-space: nowrap; }
.pgs { width: 26px; }
.pgsel { width: 74px; justify-content: space-between; padding: 0 11px 0 5px; }
.pgtab { width: 51px; color: #1482cf; font-weight: 700; }
.st { padding: 0 6px 0 6px; gap: 3px; }
.count { width: 104px; padding: 0 9px 0 5px; line-height: 11px; }
.count > div:first-child { display: flex; justify-content: space-between; }
.count a { color: #dd9234; text-decoration: none; }
.meter { height: 2px; background: #ececec; }
.meter i { display: block; height: 2px; background: #2f86e0; }
.zb { width: 14px; height: 14px; margin: 0 2px; }
.zoom { appearance: none; width: 60px; height: 8px; margin: 0; background: linear-gradient(#ddd, #ddd) center / 100% 1px no-repeat; }
.zoom::-webkit-slider-thumb { appearance: none; width: 7px; height: 7px; border: 1px solid #333; border-radius: 50%; background: #fff; }
.pct { gap: 3px; }
.full { width: 28px; }
.desk { height: 4px; flex: none; background: linear-gradient(90deg, #bfe0e6, #d9eef2 50%, #c9def2); }
```
